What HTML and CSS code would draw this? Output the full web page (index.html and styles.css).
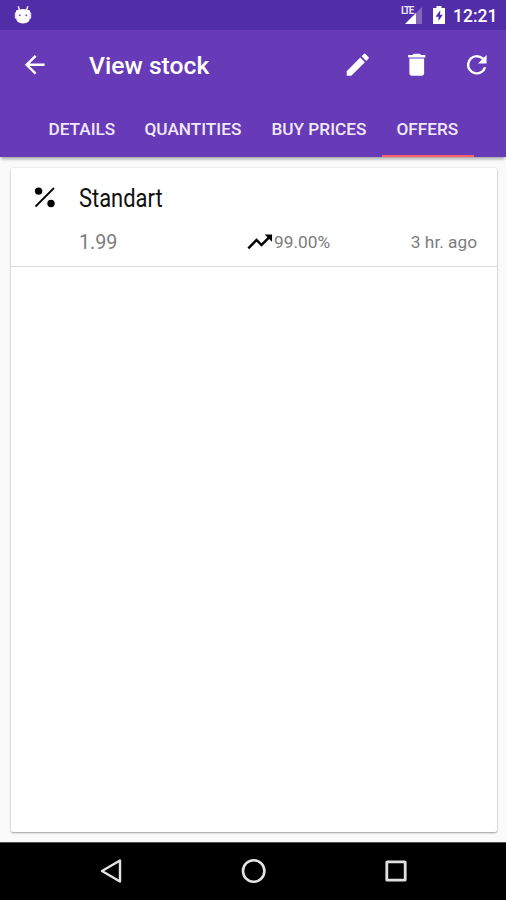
FILE: index.html
```html
<!DOCTYPE html>
<html lang="en">
<head>
<meta charset="utf-8">
<title>View stock</title>
<link rel="stylesheet" href="styles.css">
</head>
<body>
<div class="screen">
  <div class="status">
    <svg class="droid" width="18" height="20" viewBox="0 0 18 20"><path d="M4.2 1.2 5.4 5M13.8 1.2 12.6 5" stroke="#e6def5" stroke-width="1.6"/><path d="M2 5.5Q9 2.5 16 5.5V12Q16 18.5 9 18.5T2 12Z" fill="#fff"/><path d="M1.6 8v5M16.4 8v5" stroke="#e6def5" stroke-width="1.6" stroke-linecap="round"/><circle cx="5.7" cy="10.3" r="1" fill="#7659b9"/><circle cx="12.3" cy="10.3" r="1" fill="#7659b9"/></svg>
    <div class="signal">
      <svg width="24" height="20" viewBox="0 0 24 20"><path d="M22 2V19H5Z" fill="#8368bd"/><path d="M16 8V19H5Z" fill="#fff"/></svg>
      <span class="lte">LTE</span>
    </div>
    <svg class="battery" width="14" height="20" viewBox="0 0 14 20"><path d="M4.500 1h5v2H13v16H1V3h3.500Z" fill="#fff"/><path d="M8.300 5.300 3.500 11.800h3v4.200l4.300-6.300H8Z" fill="#512da8"/></svg>
    <span class="clock">12:21</span>
  </div>
  <header class="bar">
    <svg class="icon back" viewBox="0 0 24 24"><path d="M20 11H7.830l5.590-5.590L12 4l-8 8 8 8 1.410-1.410L7.830 13H20v-2z"/></svg>
    <h1 class="title">View stock</h1>
    <div class="actions">
      <svg class="icon" viewBox="0 0 24 24"><path d="M3 17.250V21h3.750L17.810 9.940l-3.750-3.750L3 17.250zM20.710 7.040a1 1 0 0 0 0-1.410l-2.340-2.340a1 1 0 0 0-1.410 0l-1.830 1.830 3.750 3.750 1.830-1.830z"/></svg>
      <svg class="icon" viewBox="0 0 24 24"><path d="M6 19c0 1.100.9 2 2 2h8c1.100 0 2-.9 2-2V7H6v12zM19 4h-3.500l-1-1h-5l-1 1H5v2h14V4z"/></svg>
      <svg class="icon" viewBox="0 0 24 24"><path d="M17.650 6.350A7.960 7.960 0 0 0 12 4a8 8 0 1 0 7.730 10h-2.080A6 6 0 1 1 12 6c1.660 0 3.140.69 4.220 1.780L13 11h7V4l-2.350 2.350z"/></svg>
    </div>
  </header>
  <nav class="tabs">
    <div class="tab details"><span>DETAILS</span></div>
    <div class="tab quantities"><span>QUANTITIES</span></div>
    <div class="tab prices"><span>BUY PRICES</span></div>
    <div class="tab offers active"><span>OFFERS</span></div>
  </nav>
  <main class="content">
    <section class="card">
      <article class="offer">
        <div class="head">
          <svg class="percent" width="22" height="22" viewBox="0 0 22 22"><path d="M1.500 19.500 20 1" stroke="#000" stroke-width="1.800"/><circle cx="4.600" cy="4.100" r="3.700"/><circle cx="17" cy="16.500" r="3.700"/></svg>
          <span class="name">Standart</span>
        </div>
        <div class="meta">
          <span class="price">1.99</span>
          <svg class="trend" viewBox="0 0 24 24"><path d="M16 6l2.290 2.290-4.880 4.880-4-4L2 16.590 3.410 18l6-6 4 4 6.300-6.290L22 12V6z"/></svg>
          <span class="rate">99.00%</span>
          <span class="time">3 hr. ago</span>
        </div>
      </article>
    </section>
  </main>
  <footer class="nav">
    <svg width="24" height="26" viewBox="0 0 24 26"><path d="M21 2.500v21L3 13Z" fill="none" stroke="#e4e4e4" stroke-width="2.400" stroke-linejoin="round"/></svg>
    <svg width="26" height="26" viewBox="0 0 26 26"><circle cx="12.700" cy="13" r="10.700" fill="none" stroke="#e4e4e4" stroke-width="2.600"/></svg>
    <svg width="24" height="26" viewBox="0 0 24 26"><rect x="2.800" y="3.800" width="18.400" height="18.400" rx=".5" fill="none" stroke="#e0e0e0" stroke-width="2.800"/></svg>
  </footer>
</div>
</body>
</html>
```
FILE: styles.css
```css
* { box-sizing: border-box; }
body { margin: 0; font-family: Roboto, "Liberation Sans", sans-serif; }
svg { display: block; flex: none; }
span, h1 { white-space: nowrap; }
.screen { width: 506px; height: 900px; display: flex; flex-direction: column; background: #fafafa; overflow: hidden; }

.status { height: 30px; flex: none; display: flex; align-items: center; background: #512da8; color: #fff; padding: 0 9px 0 14px; }
.signal { position: relative; margin-left: auto; margin-right: 8px; height: 30px; padding-top: 5px; }
.lte { position: absolute; left: 1px; top: 6px; font-size: 10px; line-height: 9px; font-weight: 700; letter-spacing: -1.400px; color: #e6def5; }
.battery { margin-right: 7px; }
.clock { width: 44px; font-size: 17.500px; line-height: 20px; font-weight: 500; padding-top: 2px; }

.bar { height: 69px; flex: none; display: flex; align-items: center; background: #673ab7; padding: 0 14.600px 0 20px; }
.icon { width: 29.500px; height: 29.500px; fill: #fff; }
.title { margin: 2px 0 0 39.500px; font-size: 24.700px; line-height: 30px; font-weight: 500; color: #fff; }
.actions { display: flex; gap: 30px; margin-left: auto; }

.tabs { height: 58px; flex: none; display: flex; background: #673ab7; padding-left: 34px; box-shadow: 0 3px 3px -1px rgba(0,0,0,.35); }
.tab { display: flex; align-items: center; padding-left: 14.500px; border-bottom: 2px solid transparent; font-size: 17.200px; line-height: 22px; font-weight: 500; color: #f0e9fb; }
.details { width: 96px; }
.quantities { width: 127px; }
.prices { width: 125px; }
.offers { width: 92px; }
.active { border-bottom-color: #fb6068; }
.tab span { padding-top: 3px; }

.content { flex: 1; padding: 11px 9px 10px 11px; }
.card { height: 100%; background: #fff; border-radius: 2px; box-shadow: 0 1px 2px rgba(0,0,0,.34), 0 0 2px rgba(0,0,0,.12); }
.offer { height: 99px; border-bottom: 1px solid #dcdcdc; }
.head { height: 56px; display: flex; align-items: center; padding: 3px 0 0 23px; }
.name { margin-left: 23px; font-size: 25.500px; line-height: 30px; color: #111; transform: scaleX(.86); transform-origin: left; }
.meta { height: 36px; display: flex; align-items: center; padding: 0 20px 0 68px; color: #7c7c7c; }
.price { width: 165.500px; font-size: 19.700px; }
.trend { width: 29.500px; height: 29.500px; }
.rate { font-size: 17.300px; }
.time { margin-left: auto; font-size: 17.300px; }

.nav { height: 58px; flex: none; display: flex; justify-content: space-between; align-items: center; background: #000; border-top: 1px solid #555; padding: 0 98px 2px 99px; }
```
